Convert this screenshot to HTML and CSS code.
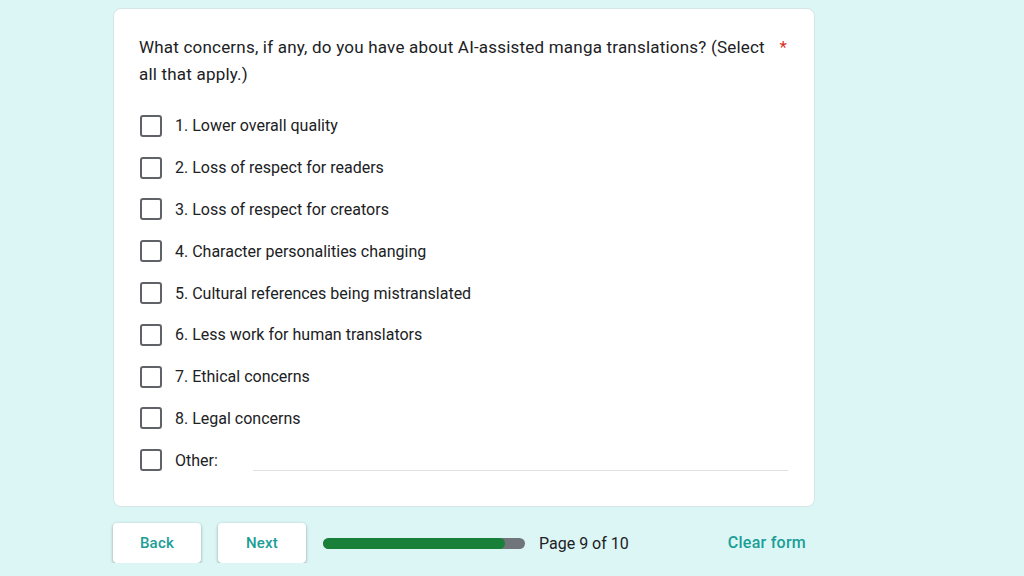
FILE: index.html
```html
<!DOCTYPE html>
<html>
<head>
<meta charset="utf-8">
<link rel="stylesheet" href="styles.css">
</head>
<body>
<div class="page">
  <div class="card">
    <div class="question">
      <span class="qtext">What concerns, if any, do you have about AI-assisted manga translations? (Select all that apply.)</span>
      <span class="req">*</span>
    </div>
    <div class="options">
      <label class="opt"><span class="box"></span><span class="lbl">1. Lower overall quality</span></label>
      <label class="opt"><span class="box"></span><span class="lbl">2. Loss of respect for readers</span></label>
      <label class="opt"><span class="box"></span><span class="lbl">3. Loss of respect for creators</span></label>
      <label class="opt"><span class="box"></span><span class="lbl">4. Character personalities changing</span></label>
      <label class="opt"><span class="box"></span><span class="lbl">5. Cultural references being mistranslated</span></label>
      <label class="opt"><span class="box"></span><span class="lbl">6. Less work for human translators</span></label>
      <label class="opt"><span class="box"></span><span class="lbl">7. Ethical concerns</span></label>
      <label class="opt"><span class="box"></span><span class="lbl">8. Legal concerns</span></label>
      <label class="opt other"><span class="box"></span><span class="lbl">Other:</span><span class="otherline"></span></label>
    </div>
  </div>
  <div class="footer">
    <button class="btn">Back</button>
    <button class="btn next">Next</button>
    <div class="progress"><div class="fill"></div></div>
    <span class="pagetext">Page 9 of 10</span>
    <span class="spacer"></span>
    <span class="clear">Clear form</span>
  </div>
</div>
</body>
</html>
```
FILE: styles.css
```css
html, body {
  margin: 0;
  padding: 0;
  background: #dcf6f6;
  font-family: Roboto, "Liberation Sans", sans-serif;
  color: #202124;
}
.page {
  width: 702px;
  margin-left: 113px;
  padding-top: 8px;
}
.card {
  background: #fff;
  border: 1px solid #d5e6e6;
  border-radius: 8px;
  padding: 25px 26px 25px 25px;
  box-sizing: border-box;
  height: 499px;
}
.question {
  display: flex;
  font-size: 17px;
  line-height: 27px;
  letter-spacing: 0.2px;
}
.qtext {
  flex: 1;
  padding-right: 8px;
}
.req {
  color: #d93025;
  padding-right: 1px;
}
.options {
  margin-top: 17px;
}
.opt {
  display: flex;
  align-items: center;
  height: 41.8px;
  font-size: 16px;
}
.box {
  width: 18px;
  height: 18px;
  border: 2px solid #5f6368;
  border-radius: 3px;
  margin-left: 1px;
  flex: none;
}
.lbl {
  margin-left: 13px;
}
.otherline {
  flex: 1;
  align-self: flex-end;
  margin-left: 35px;
  margin-bottom: 10px;
  border-bottom: 1px solid #e0e0e0;
}
.footer {
  display: flex;
  align-items: center;
  margin-top: 16px;
}
.btn {
  width: 88px;
  height: 40px;
  background: #fff;
  border: none;
  border-radius: 4px;
  box-shadow: 0 1px 2px rgba(60,64,67,0.3), 0 1px 3px 1px rgba(60,64,67,0.15);
  color: #1a9e96;
  font-family: Roboto, "Liberation Sans", sans-serif;
  font-size: 15px;
  font-weight: 500;
  letter-spacing: 0.25px;
  padding: 0;
}
.next {
  margin-left: 17px;
}
.progress {
  margin-left: 17px;
  width: 202px;
  height: 11px;
  border-radius: 6px;
  background: #70757a;
  overflow: hidden;
}
.fill {
  width: 182px;
  height: 100%;
  background: #188038;
  border-radius: 6px;
}
.pagetext {
  margin-left: 14px;
  font-size: 16px;
  color: #202124;
}
.spacer {
  flex: 1;
}
.clear {
  color: #1a9e96;
  font-size: 16px;
  font-weight: 500;
  letter-spacing: 0.25px;
  margin-right: 9px;
  margin-top: -2px;
}
```
